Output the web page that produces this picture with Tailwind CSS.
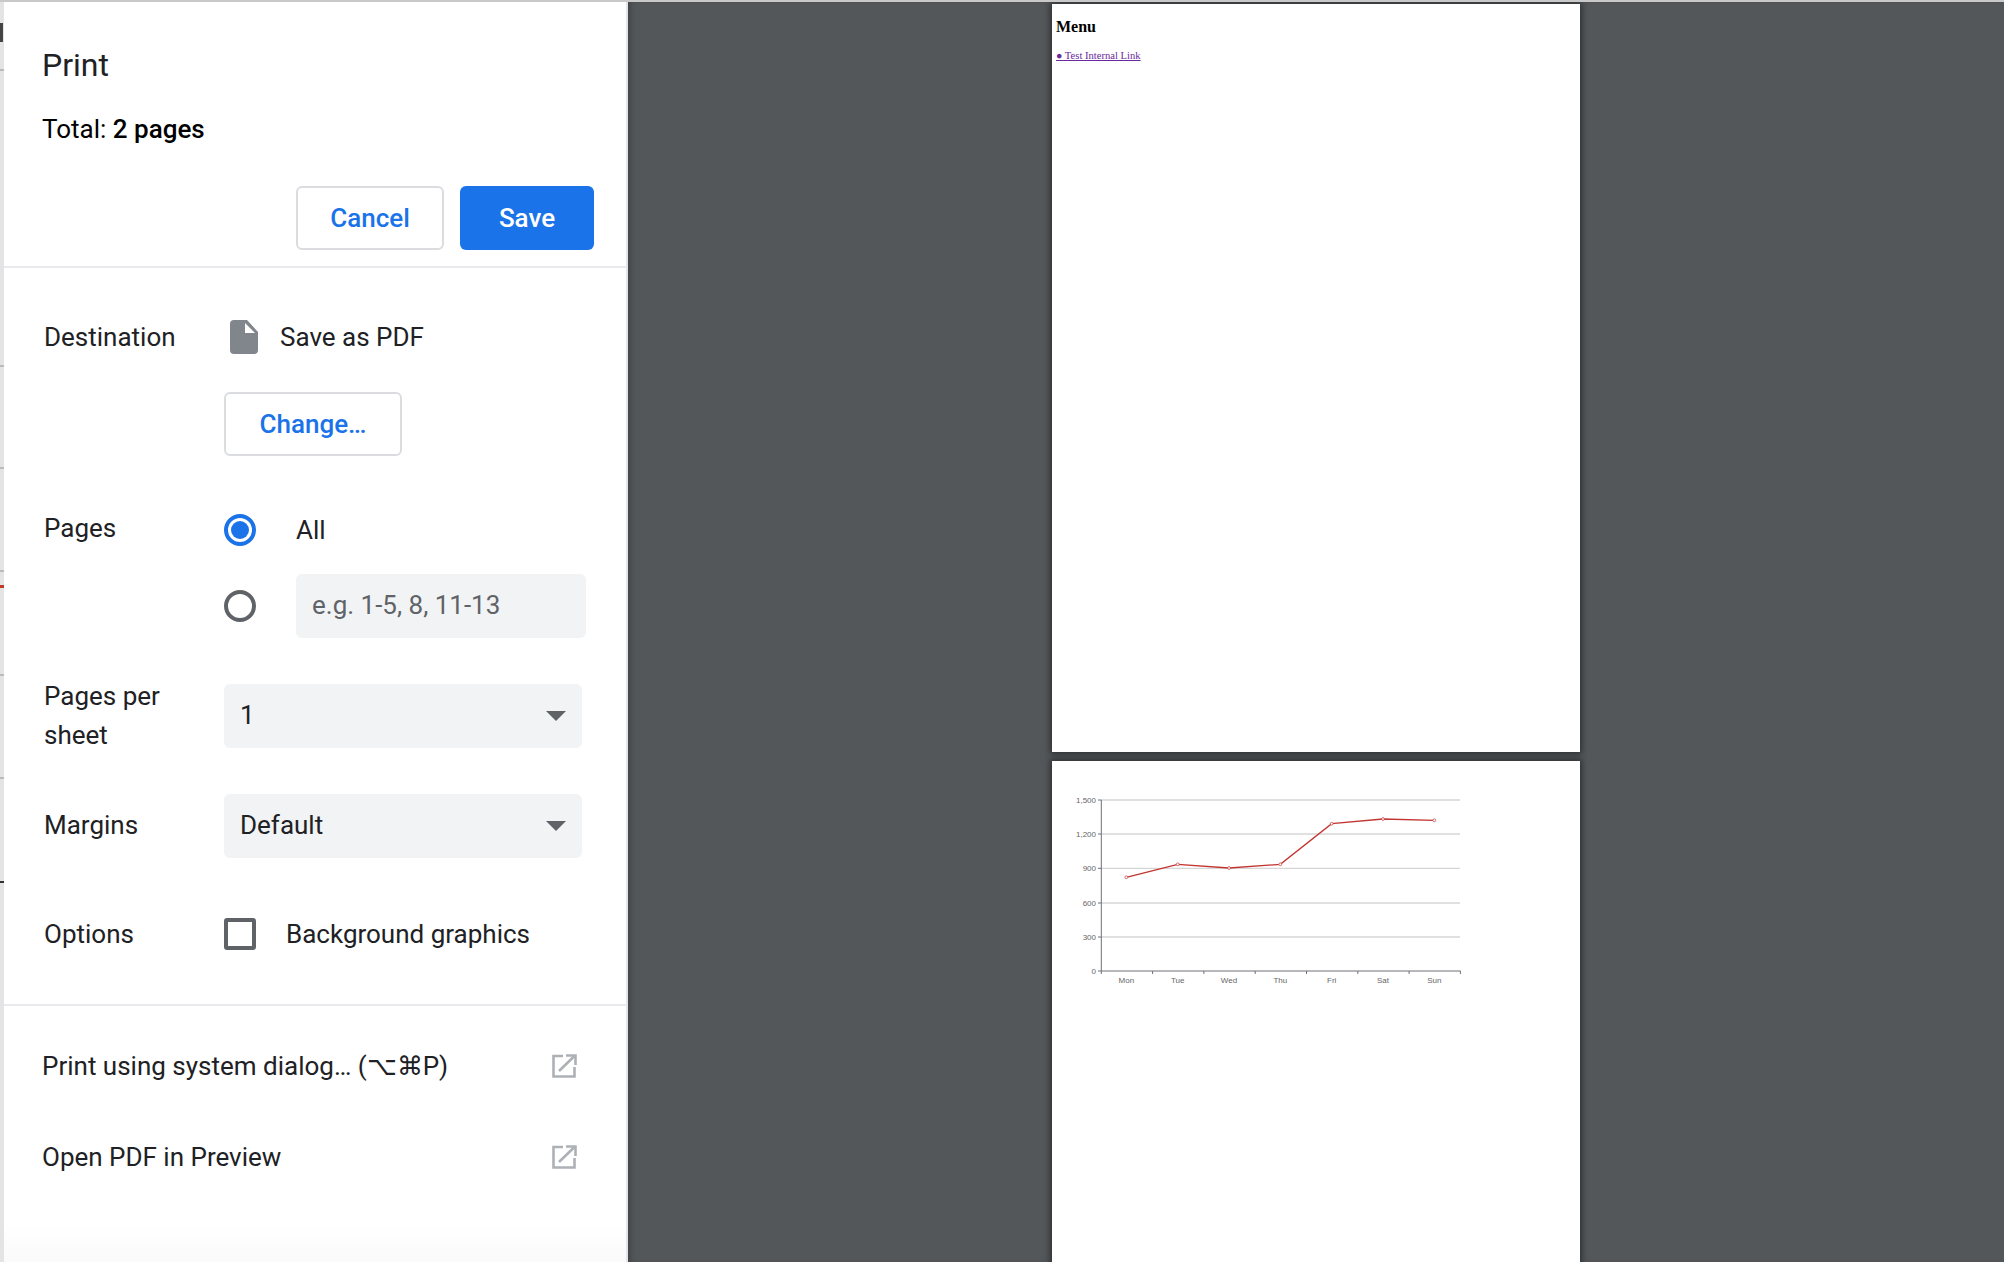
<!DOCTYPE html>
<html lang="en">
<head>
  <meta charset="UTF-8" />
  <title>Print</title>
  <script src="https://cdn.jsdelivr.net/npm/@tailwindcss/browser@4"></script>
</head>
<body class="bg-[#53575a] font-['Roboto',sans-serif] overflow-hidden">
  <div class="flex h-[1262px] w-[2004px] overflow-hidden border-t-2 border-[#c9c9c9]">

    <!-- sliver of the page behind the dialog -->
    <div class="relative w-[4px] shrink-0 bg-[#e4e4e4]">
      <div class="absolute left-0 top-[21px] h-[19px] w-[3px] bg-[#444]"></div>
      <div class="absolute left-0 top-[67px] h-[2px] w-full bg-[#bbb]"></div>
      <div class="absolute left-0 top-[363px] h-[2px] w-full bg-[#bbb]"></div>
      <div class="absolute left-0 top-[465px] h-[2px] w-full bg-[#bbb]"></div>
      <div class="absolute left-0 top-[568px] h-[2px] w-full bg-[#bbb]"></div>
      <div class="absolute left-0 top-[583px] h-[3px] w-full bg-[#c0392b]"></div>
      <div class="absolute left-0 top-[672px] h-[2px] w-full bg-[#bbb]"></div>
      <div class="absolute left-0 top-[775px] h-[2px] w-full bg-[#bbb]"></div>
      <div class="absolute left-0 top-[879px] h-[2px] w-full bg-[#333]"></div>
    </div>

    <!-- settings panel -->
    <aside class="flex w-[624px] shrink-0 flex-col border-r-2 border-[#e3e4e8] bg-white text-[#202124]">
      <div class="h-[266px] border-b-2 border-[#e8eaed] pl-[38px] pr-[32px]">
        <h1 class="pt-[44px] text-[32px] leading-[38px] font-normal">Print</h1>
        <p class="mt-[29px] text-[26px] leading-[32px] text-black">Total: <span class="font-medium">2 pages</span></p>
        <div class="mt-[41px] flex justify-end gap-[16px]">
          <button class="h-[64px] w-[148px] rounded-[6px] border-2 border-[#dadce0] text-[26px] font-medium text-[#1a73e8]">Cancel</button>
          <button class="h-[64px] w-[134px] rounded-[6px] bg-[#1a73e8] text-[26px] font-medium text-white">Save</button>
        </div>
      </div>

      <div class="h-[738px] border-b-2 border-[#e8eaed] pl-[40px] text-[26px] leading-[40px]">
        <div class="mt-[49px] flex">
          <div class="w-[180px]">Destination</div>
          <div>
            <div class="flex h-[40px] items-center">
              <svg class="ml-[6px] h-[34px] w-[28px]" viewBox="0 0 28 34"><path fill="#80868b" d="M4 0h13l11 12v18a4 4 0 0 1-4 4H4a4 4 0 0 1-4-4V4a4 4 0 0 1 4-4z"/><path fill="#fff" d="M15 3v10h10z"/></svg>
              <span class="ml-[22px]">Save as PDF</span>
            </div>
            <button class="mt-[35px] h-[64px] w-[178px] rounded-[6px] border-2 border-[#dadce0] text-[26px] font-medium text-[#1a73e8]">Change…</button>
          </div>
        </div>

        <div class="mt-[52px] flex">
          <div class="w-[180px]">Pages</div>
          <div class="flex flex-col">
            <div class="flex h-[44px] items-center">
              <span class="flex h-[32px] w-[32px] items-center justify-center rounded-full border-4 border-[#1a73e8]"><span class="h-[18px] w-[18px] rounded-full bg-[#1a73e8]"></span></span>
              <span class="ml-[40px]">All</span>
            </div>
            <div class="mt-[22px] flex h-[64px] items-center">
              <span class="h-[32px] w-[32px] rounded-full border-4 border-[#5f6368]"></span>
              <div class="ml-[40px] flex h-[64px] w-[290px] items-center rounded-[6px] bg-[#f1f3f4] pb-[3px] pl-[16px] text-[#5f6368]">e.g. 1-5, 8, 11-13</div>
            </div>
          </div>
        </div>

        <div class="mt-[46px] flex">
          <div class="-my-[7px] w-[180px] leading-[39px]">Pages per<br />sheet</div>
          <div class="flex h-[64px] w-[358px] items-center justify-between rounded-[6px] bg-[#f1f3f4] px-[16px]">
            <span class="-mt-[2px]">1</span>
            <span class="h-0 w-0 border-x-[10px] border-t-[10px] border-x-transparent border-t-[#5f6368]"></span>
          </div>
        </div>

        <div class="mt-[46px] flex items-center">
          <div class="-mt-[2px] w-[180px]">Margins</div>
          <div class="flex h-[64px] w-[358px] items-center justify-between rounded-[6px] bg-[#f1f3f4] px-[16px]">
            <span class="-mt-[2px]">Default</span>
            <span class="h-0 w-0 border-x-[10px] border-t-[10px] border-x-transparent border-t-[#5f6368]"></span>
          </div>
        </div>

        <div class="mt-[56px] flex items-center">
          <div class="w-[180px]">Options</div>
          <span class="h-[32px] w-[32px] rounded-[3px] border-4 border-[#5f6368]"></span>
          <span class="ml-[30px]">Background graphics</span>
        </div>
      </div>

      <div class="flex-1 bg-gradient-to-b from-white from-85% to-[#fafafa] pl-[38px] pr-[49px] text-[26px] leading-[32px]">
        <div class="mt-[44px] flex h-[32px] items-center justify-between">
          <span>Print using system dialog… (⌥⌘P)</span>
          <svg class="h-[24px] w-[25px]" viewBox="0 0 25 24" fill="none" stroke="#adb1b6" stroke-width="2.6"><path d="M11 2H1.5v20.5h21V13"/><path d="M7 17 22.5 2"/><path d="M14 1.5h9.5v9.5"/></svg>
        </div>
        <div class="mt-[59px] flex h-[32px] items-center justify-between">
          <span>Open PDF in Preview</span>
          <svg class="h-[24px] w-[25px]" viewBox="0 0 25 24" fill="none" stroke="#adb1b6" stroke-width="2.6"><path d="M11 2H1.5v20.5h21V13"/><path d="M7 17 22.5 2"/><path d="M14 1.5h9.5v9.5"/></svg>
        </div>
      </div>
    </aside>

    <!-- preview -->
    <main class="flex flex-1 flex-col items-center gap-[9px] pt-[2px] shadow-[inset_6px_0_6px_-4px_rgba(0,0,0,0.25)]">
      <section class="h-[748px] w-[528px] shrink-0 bg-white pl-[4px] pt-[13px] font-['Liberation_Serif',serif] shadow-[0_0_6px_2px_rgba(0,0,0,0.45)]">
        <h2 class="text-[16px] leading-[20px] font-bold text-black">Menu</h2>
        <a href="#" class="mt-[13px] block w-fit text-[10.6px] leading-[12px] text-[#6a2a9b] underline">● Test Internal Link</a>
      </section>

      <section class="h-[600px] w-[528px] shrink-0 bg-white shadow-[0_0_6px_2px_rgba(0,0,0,0.45)]">
        <svg class="mt-[27px]" width="528" height="200" viewBox="1052 788 528 200" font-family="Liberation Sans, sans-serif" font-size="8" fill="#666">
          <g stroke="#d6d6d6" stroke-width="1.3">
            <path d="M1101 800H1460"/><path d="M1101 834H1460"/><path d="M1101 868.3H1460"/><path d="M1101 903H1460"/><path d="M1101 937H1460"/>
          </g>
          <path fill="none" stroke="#6e7079" stroke-width="1" d="M1098 800h3.3M1098 834h3.3M1098 868.3h3.3M1098 903h3.3M1098 937h3.3M1098 971h3.3M1101.3 800V971H1460.6M1101.3 971v3M1152.6 971v3M1203.9 971v3M1255.2 971v3M1306.5 971v3M1357.8 971v3M1409.1 971v3M1460.4 971v3"/>
          <polyline fill="none" stroke="#c23531" stroke-width="1.3" points="1126.3,877.3 1177.7,864.3 1229,868 1280.3,864.3 1331.7,823.7 1383,819 1434.3,820.3"/>
          <g fill="#fff" stroke="#c23531" stroke-width="0.7">
            <circle cx="1126.3" cy="877.3" r="1.4"/><circle cx="1177.7" cy="864.3" r="1.4"/><circle cx="1229" cy="868" r="1.4"/><circle cx="1280.3" cy="864.3" r="1.4"/><circle cx="1331.7" cy="823.7" r="1.4"/><circle cx="1383" cy="819" r="1.4"/><circle cx="1434.3" cy="820.3" r="1.4"/>
          </g>
          <g text-anchor="end">
            <text x="1096" y="802.7">1,500</text><text x="1096" y="836.7">1,200</text><text x="1096" y="871">900</text><text x="1096" y="905.7">600</text><text x="1096" y="939.7">300</text><text x="1096" y="973.7">0</text>
          </g>
          <g text-anchor="middle">
            <text x="1126.3" y="983">Mon</text><text x="1177.7" y="983">Tue</text><text x="1229" y="983">Wed</text><text x="1280.3" y="983">Thu</text><text x="1331.7" y="983">Fri</text><text x="1383" y="983">Sat</text><text x="1434.3" y="983">Sun</text>
          </g>
        </svg>
      </section>
    </main>
  </div>
</body>
</html>
